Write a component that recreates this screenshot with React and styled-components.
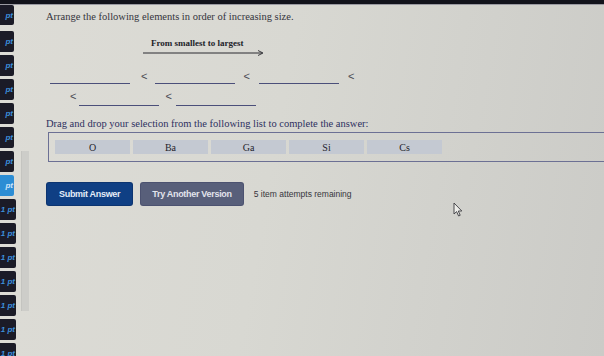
import React from 'react'
import styled, { createGlobalStyle } from 'styled-components'

const GlobalStyle = createGlobalStyle`
    html, body {
        margin: 0;
        padding: 0;
        width: 604px;
        height: 356px;
        overflow: hidden;
        background: #d4d4ce;
    }
`;

const Screen = styled.div`
    width: 604px;
    height: 356px;
    display: flex;
    flex-direction: column;
    overflow: hidden;
    background: linear-gradient(100deg, #dddcd6 0%, #d8d8d2 45%, #cbcbc7 100%);
`;

const TopBar = styled.div`
    height: 4px;
    flex-shrink: 0;
    background: #12131b;
    border-bottom: 1px solid #9a9aa2;
`;

const Body = styled.div`
    flex: 1;
    display: flex;
    min-height: 0;
`;

const Side = styled.div`
    width: 46px;
    flex-shrink: 0;
    display: flex;
`;

const Tiles = styled.div`
    display: flex;
    flex-direction: column;
    gap: 3px;
`;

const Tile = styled.div`
    width: ${p => (p.$wide ? '16px' : '14px')};
    height: ${p => (p.$tall ? '20px' : '21px')};
    margin-bottom: ${p => (p.$tall ? '3px' : '0')};
    flex-shrink: 0;
    background: ${p => (p.$active ? '#2c8dd4' : '#1b1b27')};
    border-radius: 0 2px 2px 0;
    display: flex;
    align-items: center;
    justify-content: flex-end;
    padding-right: 1px;
    box-sizing: border-box;
    overflow: hidden;
    white-space: nowrap;
    font-family: "Liberation Sans", Arial, sans-serif;
    font-style: italic;
    font-weight: bold;
    font-size: 8px;
    color: ${p => (p.$active ? '#cfe6fb' : '#3d8fdc')};
`;

const Track = styled.div`
    width: 8px;
    height: 160px;
    margin: 146px 0 0 5px;
    background: #cdcdc9;
    box-shadow: inset 1px 0 0 #c4c4c0;
`;

const Main = styled.div`
    flex: 1;
    min-width: 0;
    padding-top: 5px;
    position: relative;
    font-family: "Liberation Serif", "Times New Roman", serif;
    color: #2e2e36;
`;

const Prompt = styled.div`
    font-size: 10.5px;
    line-height: 14px;
    color: #34343c;
`;

const Heading = styled.div`
    margin: 14px 0 0 105px;
    font-size: 9px;
    font-weight: bold;
    line-height: 11px;
    color: #222228;
`;

const Arrow = styled.svg`
    display: block;
    margin: 1px 0 0 97px;
`;

const BlankRow = styled.div`
    display: flex;
    align-items: flex-end;
    margin-left: ${p => p.$indent}px;
    margin-top: ${p => p.$top}px;
`;

const Blank = styled.div`
    width: 80px;
    height: 1px;
    background: #4b4f7a;
    margin-bottom: 1px;
`;

const Less = styled.span`
    font-family: "Liberation Sans", Arial, sans-serif;
    font-size: 11px;
    line-height: 11px;
    color: #4a4a52;
    margin: 0 ${p => p.$right}px ${p => p.$lift}px ${p => p.$left}px;
`;

const Instruction = styled.div`
    margin-top: 10px;
    font-size: 10.5px;
    line-height: 13px;
    color: #2d3060;
`;

const Choices = styled.div`
    margin: 2px -20px 0 2px;
    border-top: 1px solid #6c7094;
    border-bottom: 1px solid #6c7094;
    border-left: 1px solid #6c7094;
    padding: 7px 0 7px 6px;
    display: flex;
    gap: 3px;
`;

const Choice = styled.div`
    width: 75px;
    height: 14px;
    flex-shrink: 0;
    background: #c4c9d2;
    display: flex;
    align-items: center;
    justify-content: center;
    font-size: 10px;
    color: #24242c;
`;

const Actions = styled.div`
    display: flex;
    align-items: center;
    gap: 9px;
    margin: 21px 0 0 1px;
    font-family: "Liberation Sans", Arial, sans-serif;
`;

const Button = styled.div`
    height: 22px;
    padding: 0 ${p => p.$pad}px;
    display: flex;
    align-items: center;
    border-radius: 2px;
    font-size: 9px;
    font-weight: bold;
    letter-spacing: -0.3px;
    color: ${p => (p.$primary ? '#e4ecf8' : '#e2e4ec')};
    background: ${p => (p.$primary ? '#0f3f84' : '#585f7a')};
    box-shadow: 0 0 0 1px ${p => (p.$primary ? '#0c3470' : '#4c5270')};
`;

const Attempts = styled.span`
    margin-left: 2px;
    font-size: 8.5px;
    color: #36363c;
`;

const Cursor = styled.svg`
    position: absolute;
    left: 407px;
    top: 197px;
`;

const labels = [
    { text: 'pt', tall: true },
    ...Array(6).fill({ text: 'pt' }),
    { text: 'pt', active: true },
    ...Array(7).fill({ text: '1 pt', wide: true }),
];

export default function App() {
    return (
        <Screen>
            <GlobalStyle />
            <TopBar />
            <Body>
                <Side>
                    <Tiles>
                        {labels.map((l, i) => (
                            <Tile key={i} $active={l.active} $wide={l.wide} $tall={l.tall}>{l.text}</Tile>
                        ))}
                    </Tiles>
                    <Track />
                </Side>
                <Main>
                    <Prompt>Arrange the following elements in order of increasing size.</Prompt>
                    <Heading>From smallest to largest</Heading>
                    <Arrow width="124" height="6" viewBox="0 0 124 6">
                        <line x1="0" y1="3" x2="119" y2="3" stroke="#2a2a30" strokeWidth="1" />
                        <path d="M115 0.5 L120 3 L115 5.5" fill="none" stroke="#2a2a30" strokeWidth="0.9" />
                    </Arrow>
                    <BlankRow $indent={4} $top={15}>
                        <Blank />
                        <Less $left={11} $right={8} $lift={3}>&lt;</Less>
                        <Blank />
                        <Less $left={8} $right={9} $lift={3}>&lt;</Less>
                        <Blank />
                        <Less $left={9} $right={0} $lift={3}>&lt;</Less>
                    </BlankRow>
                    <BlankRow $indent={24} $top={6}>
                        <Less $left={0} $right={3} $lift={5}>&lt;</Less>
                        <Blank />
                        <Less $left={6} $right={4} $lift={5}>&lt;</Less>
                        <Blank />
                    </BlankRow>
                    <Instruction>Drag and drop your selection from the following list to complete the answer:</Instruction>
                    <Choices>
                        {['O', 'Ba', 'Ga', 'Si', 'Cs'].map(el => (
                            <Choice key={el}>{el}</Choice>
                        ))}
                    </Choices>
                    <Actions>
                        <Button $primary $pad={12}>Submit Answer</Button>
                        <Button $pad={11}>Try Another Version</Button>
                        <Attempts>5 item attempts remaining</Attempts>
                    </Actions>
                    <Cursor width="10" height="15" viewBox="0 0 10 15">
                        <path d="M1 1 L1 12 L3.6 9.6 L5.6 14 L7.2 13.3 L5.3 9 L8.8 9 Z" fill="#eeeeea" stroke="#3a3a40" strokeWidth="0.9" strokeLinejoin="round" />
                    </Cursor>
                </Main>
            </Body>
        </Screen>
    )
}
